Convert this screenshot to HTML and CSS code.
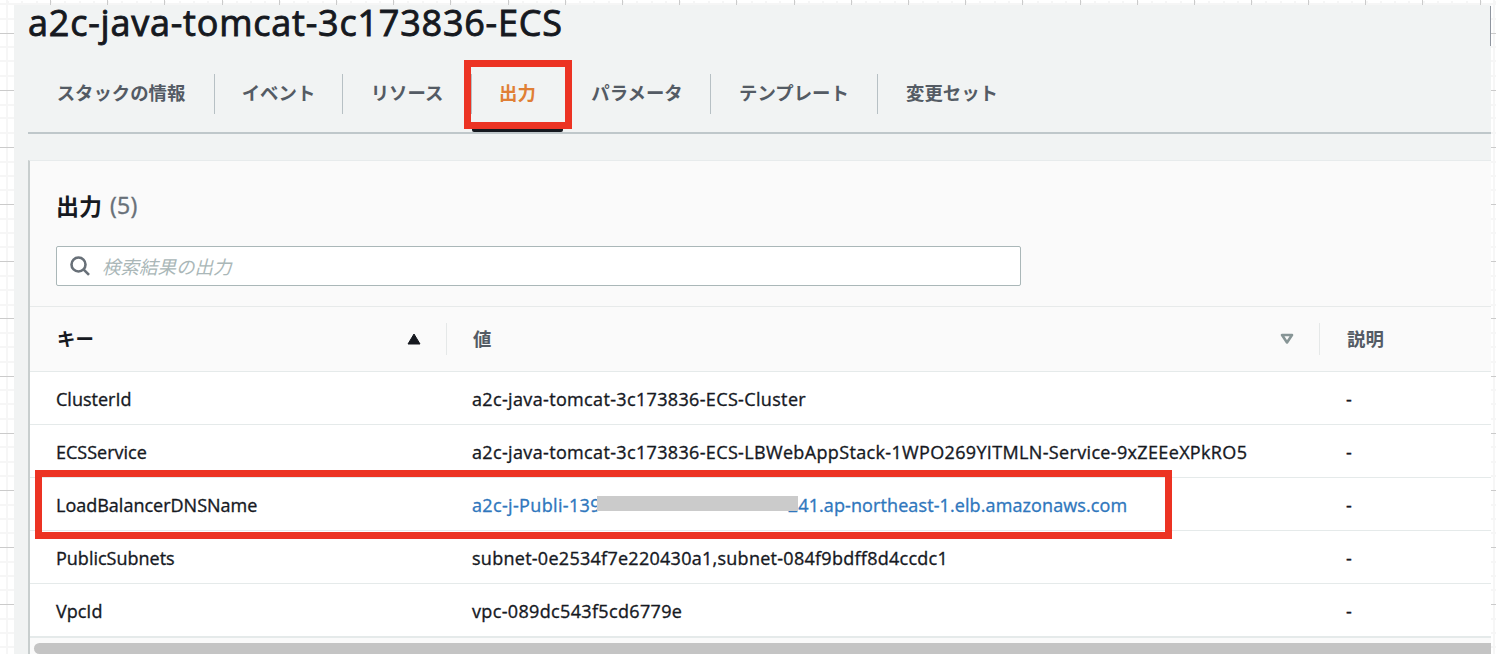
FILE: index.html
```html
<!DOCTYPE html>
<html lang="ja">
<head>
<meta charset="utf-8">
<title>a2c-java-tomcat-3c173836-ECS</title>
<link rel="stylesheet" href="styles.css">
</head>
<body>
<svg class="grid" width="1496" height="654" fill="none" shape-rendering="crispEdges">
<path class="grid-minor" d="M0 4H1496M0 18.5H1496M0 47H1496M0 61H1496M0 75.500H1496M0 104.500H1496M0 118H1496M0 132.500H1496M0 161.500H1496M0 176H1496M0 190H1496M0 218.500H1496M0 233H1496M0 247H1496M0 276H1496M0 290H1496M0 304.500H1496M0 333H1496M0 347H1496M0 361.500H1496M0 390H1496M0 404H1496M0 418.500H1496M0 447H1496M0 461.500H1496M0 476H1496M0 504.500H1496M0 519H1496M0 533H1496M0 561.500H1496M0 576H1496M0 590H1496M0 618.500H1496M0 633H1496M0 647H1496M7 0V654M1494 0V654"/>
<path class="grid-minor" stroke-dasharray="2 12.3" d="M7 2H1496" stroke-width="5"/>
<path class="grid-major" d="M0 33.5H1496M0 90.500H1496M0 147.500H1496M0 204.500H1496M0 261.500H1496M0 318.500H1496M0 376.500H1496M0 433.500H1496M0 490.500H1496M0 547.500H1496M0 604.500H1496M50.500 0V6M107.500 0V6M164.500 0V6M222.500 0V6M279.500 0V6M336.500 0V6M393.500 0V6M450.500 0V6M508.500 0V6M565.500 0V6M622.500 0V6M679.500 0V6M736.500 0V6M794.500 0V6M851.500 0V6M908.500 0V6M965.500 0V6M1022.500 0V6M1080.500 0V6M1137.500 0V6M1194.500 0V6M1251.500 0V6M1308.500 0V6M1365.500 0V6M1422.500 0V6M1480.500 0V6"/>
</svg>
<main class="page">
<h1 class="title"><span>a2c-java-tomcat-3c173836-ECS</span></h1>
<nav class="tabs">
<a class="tab tab-info">スタックの情報</a><a class="tab">イベント</a><a class="tab tab-res">リソース</a><a class="tab tab-active">出力</a><a class="tab tab-param">パラメータ</a><a class="tab tab-template">テンプレート</a><a class="tab tab-last">変更セット</a>
</nav>
<section class="panel">
<header class="panel-head">
<h2 class="panel-title">出力 <span class="count">(5)</span></h2>
<div class="search">
<svg width="22" height="22" viewBox="0 0 22 22" fill="none" stroke="#687078" stroke-width="2.600"><circle cx="8.500" cy="9.500" r="7"/><path d="M13.500 14.300L19 19.800"/></svg>
<span class="placeholder">検索結果の出力</span>
</div>
</header>
<div class="row row-head">
<div class="cell key">キー<svg class="sort" width="14" height="12" viewBox="0 0 14 12"><path d="M7 1L13 11H1Z" fill="#16191f" stroke="#16191f" stroke-linejoin="round"/></svg></div>
<div class="cell value">値<svg class="sort" width="14" height="12" viewBox="0 0 14 12"><path d="M2 2H12L7 9.500Z" fill="none" stroke="#879596" stroke-width="2.600" stroke-linejoin="round"/></svg></div>
<div class="cell">説明</div>
</div>
<div class="row"><div class="cell key">ClusterId</div><div class="cell value">a2c-java-tomcat-3c173836-ECS-Cluster</div><div class="cell">-</div></div>
<div class="row"><div class="cell key">ECSService</div><div class="cell value">a2c-java-tomcat-3c173836-ECS-LBWebAppStack-1WPO269YITMLN-Service-9xZEEeXPkRO5</div><div class="cell">-</div></div>
<div class="row row-marked"><div class="cell key">LoadBalancerDNSName</div><div class="cell value"><a class="link"><span>a2c-j-Publi-139</span><span class="redacted"></span><span class="dns-end">241.ap-northeast-1.elb.amazonaws.com</span></a></div><div class="cell">-</div></div>
<div class="row"><div class="cell key">PublicSubnets</div><div class="cell value subnets">subnet-0e2534f7e220430a1,subnet-084f9bdff8d4ccdc1</div><div class="cell">-</div></div>
<div class="row"><div class="cell key">VpcId</div><div class="cell value">vpc-089dc543f5cd6779e</div><div class="cell">-</div></div>
<div class="scroll"><div class="thumb"></div></div>
</section>
<div class="edge"></div>
</main>
</body>
</html>
```
FILE: styles.css
```css
*, *::before, *::after { box-sizing: border-box; }
body {
  margin: 0;
  width: 1496px;
  height: 654px;
  overflow: hidden;
  position: relative;
  background: #fff;
  color: #16191f;
  font: 18px/24px "Open Sans", "Noto Sans CJK JP", sans-serif;
  white-space: nowrap;
}
.grid { position: absolute; left: 0; top: 0; }
.grid-minor { stroke: #f6f6f6; stroke-width: 2; }
.grid-major { stroke: #cbcbcb; stroke-width: 1; }
.page {
  position: relative;
  margin: 0 5px 0 14px;
  height: 654px;
  padding-left: 14px;
  overflow: hidden;
  background: linear-gradient(transparent 5px, #f1f3f3 5px);
}
.title {
  margin: 0;
  height: 60px;
  font-size: 36px;
  line-height: 46px;
  font-weight: 400;
  letter-spacing: 0.78px;
  -webkit-text-stroke: 0.9px #16191f;
}
.tabs {
  display: flex;
  height: 74px;
  border-bottom: 2px solid #bfc7ca;
  padding-top: 14px;
}
.tab {
  position: relative;
  width: 128px;
  height: 40px;
  text-align: center;
  font-family: "Noto Sans CJK JP", sans-serif;
  font-size: 18.4px;
  line-height: 37px;
  font-weight: 700;
  color: #545b64;
  border-right: 1px solid #b7c0c4;
}
.tab-info { width: 187px; }
.tab-res { width: 129px; }
.tab-active { width: 94px; color: #e07f35; padding-right: 2px; }
.tab-active::before {
  content: "";
  position: absolute;
  left: -8px;
  top: -14px;
  width: 108px;
  height: 69px;
  border: 7px solid #ec3323;
  z-index: 1;
}
.tab-active::after {
  content: "";
  position: absolute;
  left: 0;
  top: 55px;
  width: 91px;
  height: 3px;
  border-radius: 0 0 2px 2px;
  background: #16191f;
}
.tab-param { width: 145px; padding-right: 2px; }
.tab-template { width: 167px; }
.tab-last { width: 148px; border: 0; }
.panel {
  margin-top: 26px;
  border-top: 1px solid #e7ebec;
  border-left: 2px solid #c8cece;
  background: #fff;
}
.panel-head {
  height: 146px;
  padding: 28px 26px 0;
  background: #fafafa;
  border-bottom: 1px solid #e7eaea;
}
.panel-title {
  display: flex;
  gap: 8px;
  margin: 0 0 25px;
  font-family: "Noto Sans CJK JP", sans-serif;
  font-size: 23px;
  line-height: 32px;
  font-weight: 700;
}
.count {
  font-family: "Open Sans", sans-serif;
  font-weight: 400;
  color: #687078;
  font-size: 23px;
  letter-spacing: 0.3px;
  -webkit-text-stroke: 0.4px #687078;
}
.search {
  display: flex;
  align-items: center;
  width: 965px;
  height: 40px;
  padding-left: 13px;
  gap: 10px;
  border: 1px solid #aab7b8;
  border-radius: 2px;
  background: #fff;
}
.placeholder {
  font-family: "Noto Sans CJK JP", sans-serif;
  font-size: 18.5px;
  font-style: italic;
  color: #aab7b8;
}
.row {
  position: relative;
  display: flex;
  height: 53px;
  align-items: center;
  padding-top: 1px;
  border-bottom: 1px solid #e5eaea;
  -webkit-text-stroke: 0.35px currentColor;
}
.cell { padding-left: 27px; }
.key { width: 415px; padding-left: 26px; }
.value { width: 874px; padding-left: 27px; letter-spacing: 0.345px; }
.subnets { letter-spacing: 0.27px; }
.row-head {
  height: 65px;
  padding-top: 0;
  background: #fafafa;
  font-family: "Noto Sans CJK JP", sans-serif;
  font-size: 18.4px;
  font-weight: 700;
  color: #545b64;
  -webkit-text-stroke: 0;
}
.row-head .cell { display: flex; align-items: center; height: 32px; padding-bottom: 2px; }
.row-head .key, .row-head .value { justify-content: space-between; padding-right: 25px; border-right: 1px solid #e5e8e8; }
.row-head .key { color: #16191f; width: 417px; padding-left: 27px; }
.row-head .value { width: 873px; padding-left: 26px; }
.sort { position: relative; top: 1px; }
.row-marked::after {
  content: "";
  position: absolute;
  left: 5px;
  top: -8px;
  width: 1137px;
  height: 69px;
  border: 7px solid #ec3323;
  z-index: 1;
}
.link { display: flex; align-items: center; color: #2f77bd; }
.redacted { position: relative; top: -1px; width: 201px; height: 15px; margin: 0 -10px 0 -4px; background: #cbcbcb; z-index: 1; }
.dns-end { letter-spacing: 0.1px; }
.scroll { height: 20px; padding: 5px 0 0 4px; background: #fafafa; border-top: 1px solid #e5eaea; }
.thumb { height: 11px; border-radius: 6px 0 0 6px; background: #c4c4c4; }
.edge { position: absolute; right: 0; top: 6px; width: 1px; height: 40px; background: #8f959f; }
```
